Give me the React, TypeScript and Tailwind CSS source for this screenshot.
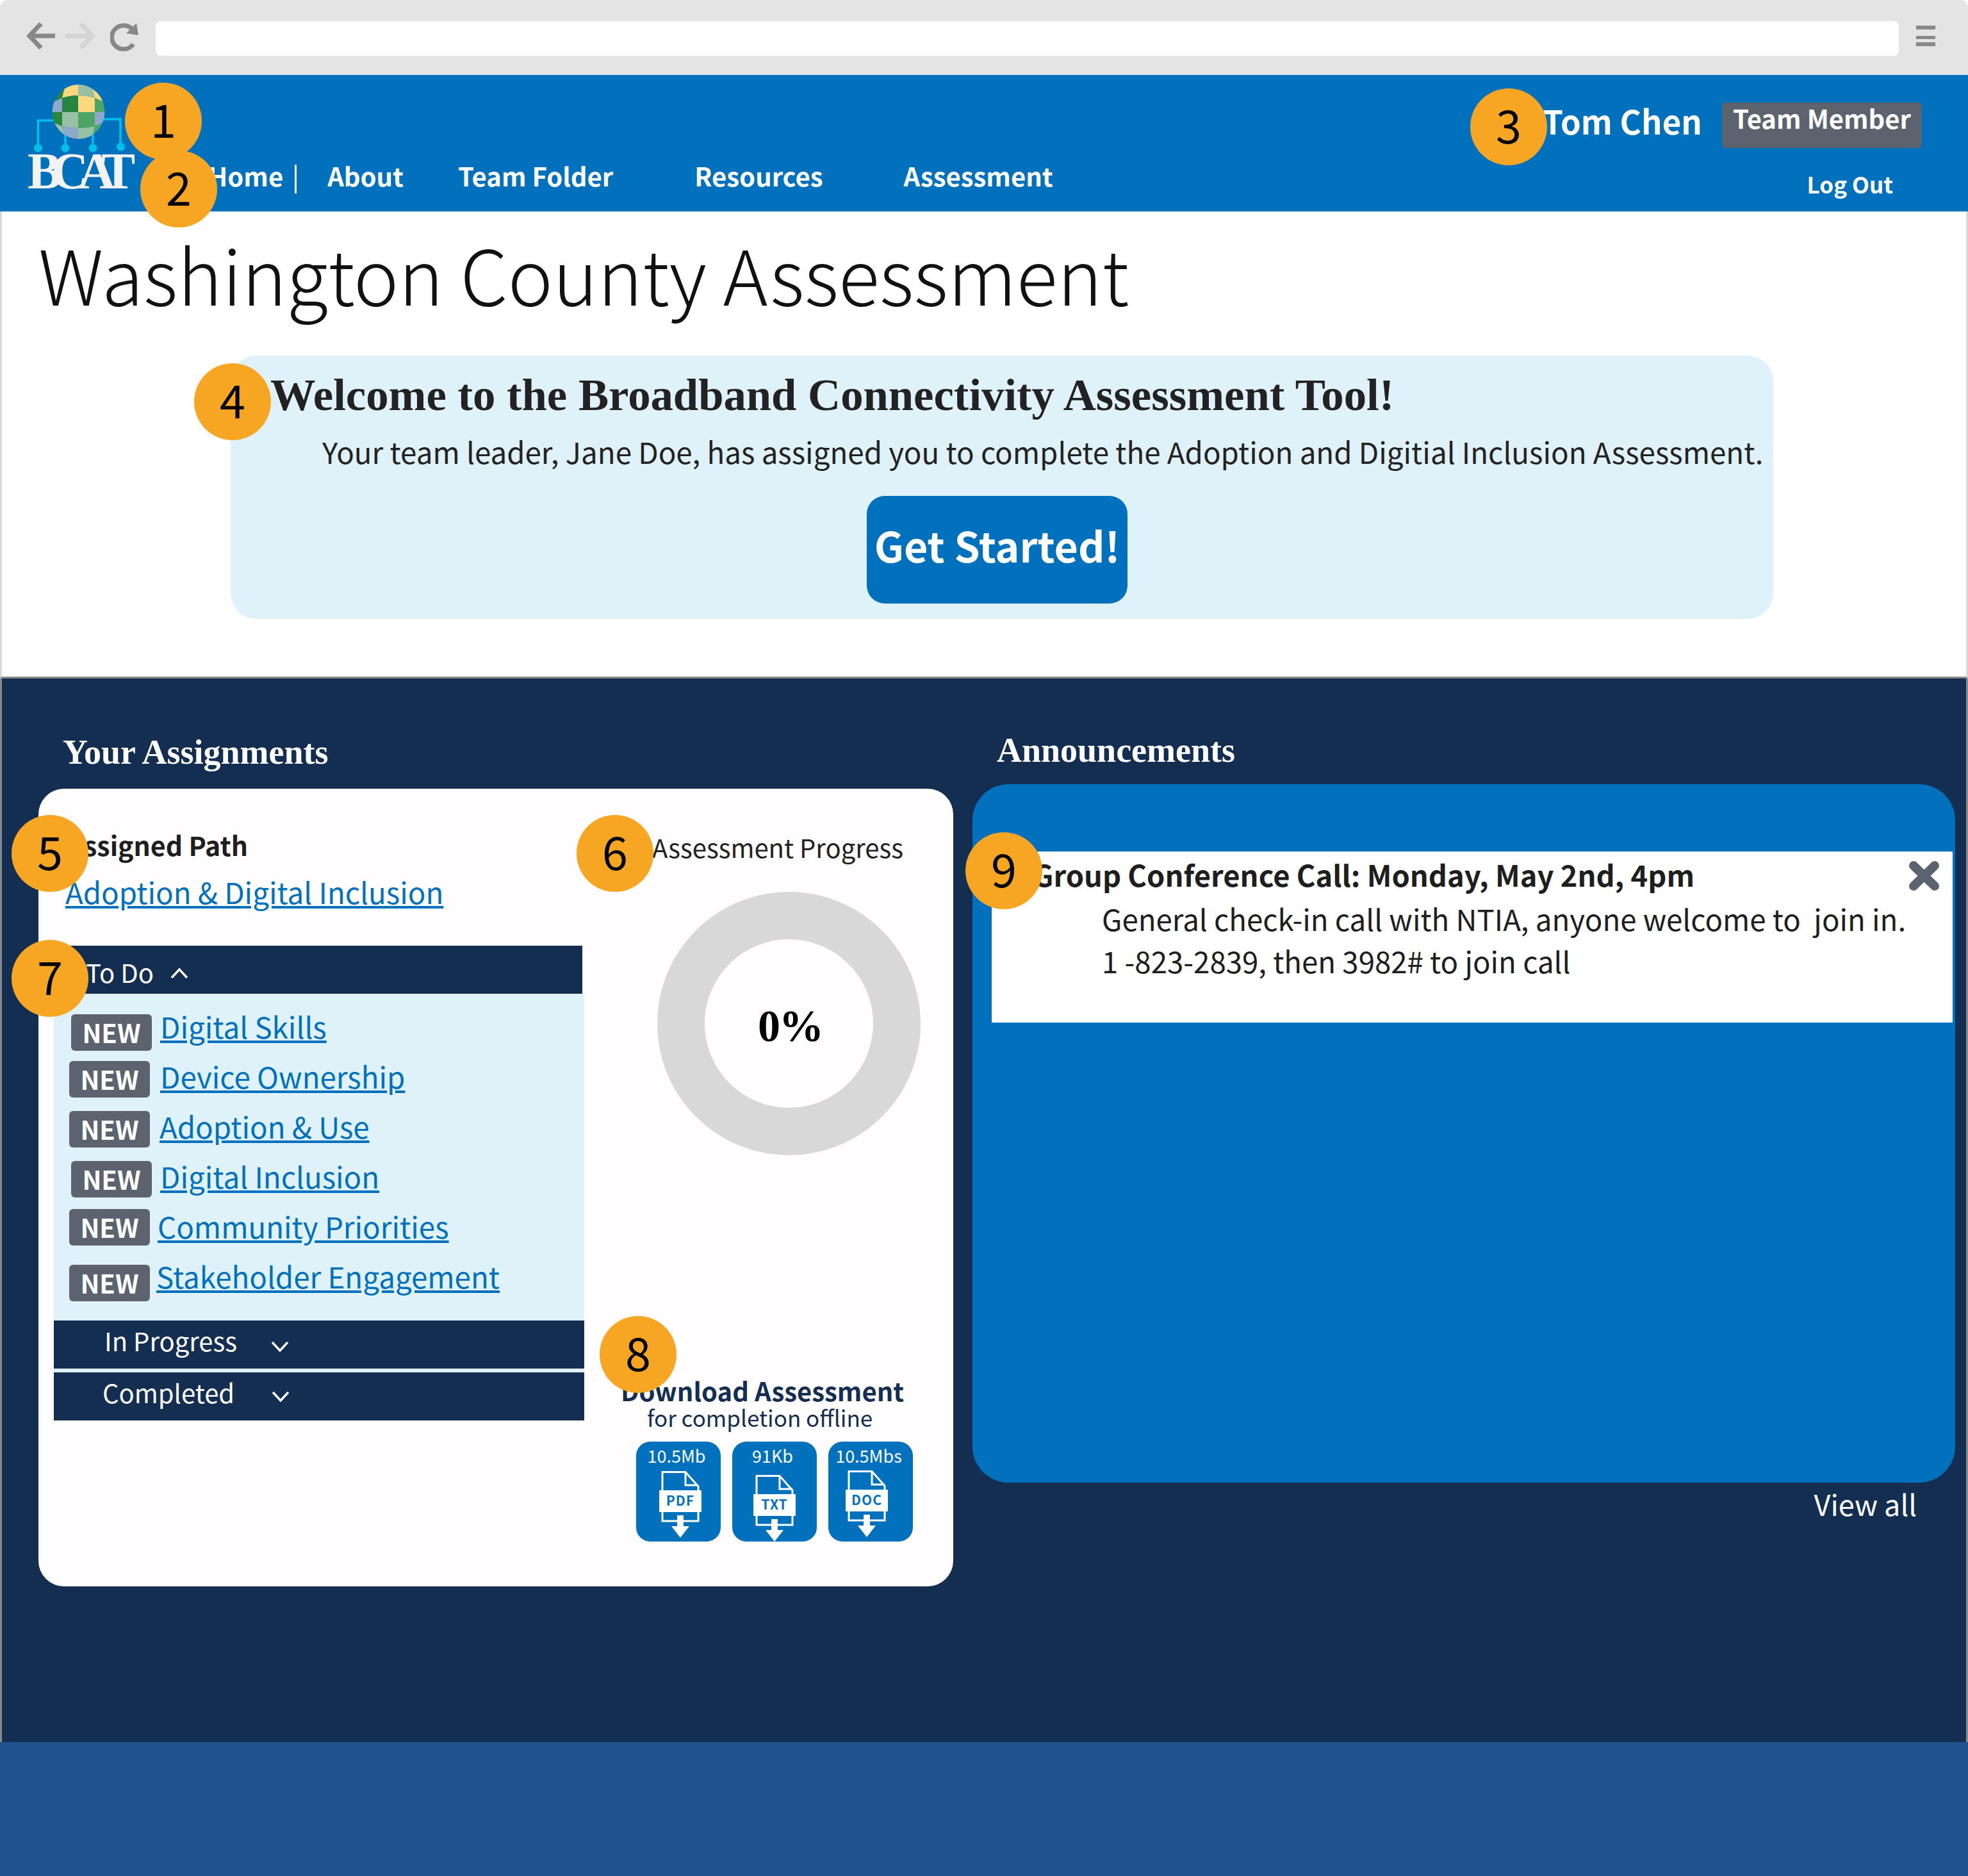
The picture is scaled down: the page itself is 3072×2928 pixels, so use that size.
import React from 'react';

const navy = 'bg-[#132e51]';

// numbered callouts that sit on top of the mock-up
const callouts = [
  { n: 1, pos: 'left-[195px] top-[129px]' },
  { n: 2, pos: 'left-[219px] top-[235px]' },
  { n: 3, pos: 'left-[2295px] top-[138px]' },
  { n: 4, pos: 'left-[303px] top-[567px]' },
  { n: 5, pos: 'left-[18px] top-[1272px]' },
  { n: 6, pos: 'left-[900px] top-[1272px]' },
  { n: 7, pos: 'left-[18px] top-[1467px]' },
  { n: 8, pos: 'left-[936px] top-[2054px]' },
  { n: 9, pos: 'left-[1507px] top-[1299px]' },
];

const todo = [
  { label: 'Digital Skills', row: 'mt-[32px]', badge: 'ml-[27px]', link: 'ml-[13px] -mt-[7px]' },
  { label: 'Device Ownership', row: 'mt-[16px]', badge: 'ml-[24px]', link: 'ml-[16px] -mt-[2px]' },
  { label: 'Adoption & Use', row: 'mt-[21px]', badge: 'ml-[24px]', link: 'ml-[15px] -mt-[2px]' },
  { label: 'Digital Inclusion', row: 'mt-[21px]', badge: 'ml-[27px]', link: 'ml-[13px] -mt-[2px]' },
  { label: 'Community Priorities', row: 'mt-[18px]', badge: 'ml-[24px]', link: 'ml-[12px] mt-[1px]' },
  { label: 'Stakeholder Engagement', row: 'mt-[30px]', badge: 'ml-[24px]', link: 'ml-[10px] -mt-[8px]' },
];

const files = [
  { size: '10.5Mb', type: 'PDF', icon: 'ml-[36px] mt-[9px]' },
  { size: '91Kb', type: 'TXT', icon: 'ml-[33px] mt-[15px]' },
  { size: '10.5Mbs', type: 'DOC', icon: 'ml-[27px] mt-[8px]' },
];

function Chevron({ up, className }: { up?: boolean; className?: string }) {
  return (
    <svg width="28" height="18" viewBox="0 0 28 18" className={className}>
      <path d={up ? 'M2 16 L14 3 L26 16' : 'M2 2 L14 15 L26 2'} fill="none" stroke="white" strokeWidth="3.5" />
    </svg>
  );
}

function FileIcon({ type, className }: { type: string; className?: string }) {
  return (
    <svg width="66" height="104" viewBox="0 0 66 104" className={className}>
      <path d="M5 30 V1.5 H41 L61 24 V30 M41 1.5 V22 H61" fill="none" stroke="white" strokeWidth="3" />
      <path d="M5 64 V78 H28 M38 78 H61 V64" fill="none" stroke="white" strokeWidth="3" />
      <rect x="0" y="30" width="66" height="34" fill="white" />
      <text x="33" y="54" textAnchor="middle" fill="#0271bd" fontSize="21" fontWeight="700" letterSpacing="1">{type}</text>
      <path d="M28 69 H38 V86 H47 L33 104 L19 86 H28 Z" fill="white" />
    </svg>
  );
}

function Logo() {
  const dark = '#26853f';
  const mid = '#4ca563';
  const light = '#97c1a2';
  const yellow = '#fbd77e';
  const peri = '#8fa8ce';
  const cells = [
    ['M70 120 H105 L97 153 L70 165 Z', dark],
    ['M105 120 H122 V149 Q110 149 97 153 Z', yellow],
    ['M122 120 H140 L148 153 Q135 149 122 149 Z', light],
    ['M140 120 H175 V165 L148 153 Z', yellow],
    ['M70 165 L97 153 V175 H70 Z', peri],
    ['M97 153 Q110 149 122 149 V175 H97 Z', dark],
    ['M122 149 Q135 149 148 153 V175 H122 Z', yellow],
    ['M148 153 L175 165 V175 H148 Z', mid],
    ['M70 175 H97 V197 L70 185 Z', dark],
    ['M97 175 H122 V200 Q110 200 97 197 Z', light],
    ['M122 175 H148 V197 Q135 200 122 200 Z', mid],
    ['M148 175 H175 V185 L148 197 Z', peri],
    ['M70 185 L97 197 L105 225 H70 Z', light],
    ['M97 197 Q110 200 122 200 V225 H105 Z', peri],
    ['M122 200 Q135 200 148 197 L142 225 H122 Z', light],
    ['M148 197 L175 185 V225 H142 Z', mid],
  ];
  return (
    <svg width="170" height="190" viewBox="40 130 170 190" className="shrink-0 ml-[40px] mt-[13px]">
      <defs>
        <clipPath id="globe">
          <ellipse cx="122.5" cy="174.5" rx="41" ry="42.5" />
        </clipPath>
      </defs>
      <path d="M85 188 H59.5 V225 M102 205 V225 M145 205 V225 M160 186 H188 V223" fill="none" stroke="#00bfe8" strokeWidth="3.5" />
      <ellipse cx="59.5" cy="231" rx="6.5" ry="6.5" fill="#00bfe8" />
      <ellipse cx="102" cy="231" rx="6.5" ry="6.5" fill="#00bfe8" />
      <ellipse cx="145" cy="231" rx="6.5" ry="6.5" fill="#00bfe8" />
      <ellipse cx="188.5" cy="229" rx="6.5" ry="6.5" fill="#00bfe8" />
      <g clipPath="url(#globe)">
        {cells.map(([d, fill], i) => (
          <path key={i} d={d} fill={fill} />
        ))}
      </g>
      <text x="43" y="294" fill="#f2f2f2" fontSize="80" fontFamily="'Liberation Serif', serif" letterSpacing="-16">BCAT</text>
    </svg>
  );
}

function BrowserBar() {
  return (
    <div className="h-[117px] bg-[#e4e4e4] rounded-t-[12px] flex items-center">
      <svg width="110" height="60" viewBox="0 0 110 60" className="ml-[40px] -mt-[4px] shrink-0">
        <path d="M46 29 H8 M24 10 L6 29 L24 48" fill="none" stroke="#888888" strokeWidth="7" />
        <path d="M62 29 H102 M86 10 L104 29 L86 48" fill="none" stroke="#d4d4d4" strokeWidth="7" />
      </svg>
      <svg width="46" height="46" viewBox="0 0 46 46" className="ml-[22px] -mt-[4px] shrink-0">
        <path d="M35 12 A18.5 18.5 0 1 0 36 35" fill="none" stroke="#888888" strokeWidth="7" />
        <path d="M41 2 L44 21 L25 18 Z" fill="#888888" />
      </svg>
      <div className="ml-[25px] w-[2721px] h-[54px] mt-[3px] bg-white rounded-[8px]" />
      <div className="ml-[27px] w-[30px] flex flex-col -mt-[5px]">
        <div className="h-[6px] bg-[#888888]" />
        <div className="h-[5px] mt-[10px] bg-[#888888]" />
        <div className="h-[6px] mt-[5px] bg-[#888888]" />
      </div>
    </div>
  );
}

function Header() {
  return (
    <div className="h-[213px] bg-[#0271bd] flex justify-between text-white font-bold">
      <div className="flex">
        <Logo />
        <nav className="flex mt-[135px] text-[40px] leading-[44px]">
          <span className="ml-[115px]">Home</span>
          <span className="w-[3px] h-[45px] bg-white ml-[18px] mt-[5px]" />
          <span className="ml-[48px]">About</span>
          <span className="ml-[85px]">Team Folder</span>
          <span className="ml-[127px]">Resources</span>
          <span className="ml-[126px]">Assessment</span>
        </nav>
      </div>
      <div className="flex flex-col items-end mr-[72px] mt-[43px]">
        <div className="flex items-start">
          <span className="text-[51px] leading-[54px] mt-[1px]">Tom Chen</span>
          <span className="ml-[31px] h-[71px] px-[17px] pt-[2px] bg-[#5c636e] rounded-[6px] text-[40px] leading-[44px]">Team Member</span>
        </div>
        <span className="mt-[36px] mr-[45px] text-[35px] leading-[40px]">Log Out</span>
      </div>
    </div>
  );
}

function Welcome() {
  return (
    <div className="h-[729px] bg-white border-x-[3px] border-x-[#d8d8d8] border-b-[3px] border-b-[#8a8a8a]">
      <h1 className="pl-[57px] pt-[30px] text-[118.4px] leading-[132px] font-light text-[#111111] whitespace-nowrap">Washington County Assessment</h1>
      <div className="ml-[357px] mt-[63px] w-[2408px] h-[411px] bg-[#e0f2f9] rounded-[40px] flex flex-col text-[#222222]">
        <h2 className="pl-[62px] pt-[25px] text-[70.7px] leading-[72px] font-bold font-['Liberation_Serif',serif] whitespace-nowrap">Welcome to the Broadband Connectivity Assessment Tool!</h2>
        <p className="pl-[143px] mt-[26px] text-[45.7px] leading-[52px] whitespace-nowrap">Your team leader, Jane Doe, has assigned you to complete the Adoption and Digitial Inclusion Assessment.</p>
        <div className="ml-[993px] mt-[44px] w-[407px] h-[168px] pb-[16px] bg-[#0271bd] rounded-[28px] flex items-center justify-center text-white font-bold text-[64.5px] leading-[72px] whitespace-nowrap">Get Started!</div>
      </div>
    </div>
  );
}

function Assignments() {
  return (
    <div className="ml-[57px] w-[1428px] shrink-0">
      <h3 className="pl-[38px] pt-[85px] mb-[27px] text-[54px] leading-[60px] font-bold text-white font-['Liberation_Serif',serif]">Your Assignments</h3>
      <div className="h-[1245px] bg-[#fffdfe] rounded-[40px] flex">
        <div className="ml-[24px] w-[828px] shrink-0">
          <div className="pl-[20px] pt-[65px] text-[41px] leading-[44px] font-bold text-[#1e1e1e]">Assigned Path</div>
          <a className="block ml-[18px] mt-[26px] text-[45.7px] leading-[50px] text-[#0271bd] underline">Adoption &amp; Digital Inclusion</a>
          <div className={`mt-[60px] w-[825px] h-[75px] ${navy} flex items-center pl-[50px] pt-[6px] text-white text-[40px] leading-[44px]`}>
            To Do
            <Chevron up className="ml-[26px] mt-[4px]" />
          </div>
          <div className="bg-[#e0f2f9] h-[666px]">
            <div className="h-[510px] flow-root">
              {todo.map((item) => (
                <div key={item.label} className={`flex items-start h-[57px] ${item.row}`}>
                  <span className={`w-[126px] h-[57px] bg-[#5c636e] rounded-[6px] text-white font-bold text-[40px] leading-[57px] text-center shrink-0 ${item.badge}`}>NEW</span>
                  <a className={`text-[45.7px] leading-[50px] text-[#0271bd] underline whitespace-nowrap ${item.link}`}>{item.label}</a>
                </div>
              ))}
            </div>
            <div className={`h-[75px] ${navy} flex items-center pl-[79px] pb-[14px] text-white text-[40px] leading-[44px]`}>
              In Progress
              <Chevron className="ml-[53px] mt-[21px]" />
            </div>
            <div className={`h-[75px] mt-[6px] ${navy} flex items-center pl-[76px] pb-[14px] text-white text-[40px] leading-[44px]`}>
              Completed
              <Chevron className="ml-[58px] mt-[15px]" />
            </div>
          </div>
        </div>
        <div className="flex-1">
          <div className="pl-[106px] pt-[69px] text-[40px] leading-[44px] text-[#222222]">Assessment Progress</div>
          <div className="ml-[114px] mt-[48px] w-[411px] h-[411px] rounded-full border-[74px] border-[#d8d8d8] flex items-center justify-center">
            <span className="pt-[8px] pl-[4px] text-[70px] leading-[70px] tracking-[-2px] font-bold text-black font-['Liberation_Serif',serif]">0%</span>
          </div>
          <div className="ml-[57px] mt-[345px] text-[40px] leading-[44px] font-bold text-[#132e51]">Download Assessment</div>
          <div className="ml-[98px] text-[35px] leading-[40px] text-[#132e51]">for completion offline</div>
          <div className="ml-[81px] mt-[18px] flex gap-[18px]">
            {files.map((f) => (
              <div key={f.type} className="w-[132px] h-[156px] bg-[#0271bd] rounded-[22px] pt-[7px] text-white">
                <div className="pr-[6px] text-center text-[27px] leading-[30px]">{f.size}</div>
                <FileIcon type={f.type} className={f.icon} />
              </div>
            ))}
          </div>
        </div>
      </div>
    </div>
  );
}

function Announcements() {
  return (
    <div className="ml-[30px] w-[1534px] shrink-0">
      <h3 className="pl-[38px] pt-[82px] mb-[23px] text-[54px] leading-[60px] font-bold text-white font-['Liberation_Serif',serif]">Announcements</h3>
      <div className="h-[1090px] bg-[#0271bd] rounded-[56px] pt-[105px] pl-[30px]">
        <div className="relative w-[1500px] h-[267px] bg-white pt-[10px] text-[#1e1e1e]">
          <div className="pl-[64px] text-[45.3px] leading-[50px] font-bold">Group Conference Call: Monday, May 2nd, 4pm</div>
          <div className="pl-[172px] mt-[11px] text-[45.6px] leading-[66px] whitespace-pre">{'General check-in call with NTIA, anyone welcome to  join in.\n1 -823-2839, then 3982# to join call'}</div>
          <svg width="47" height="46" viewBox="0 0 47 46" className="absolute right-[21px] top-[15px]">
            <path d="M7 7 L40 39 M40 7 L7 39" fill="none" stroke="#5c636e" strokeWidth="14" strokeLinecap="round" />
          </svg>
        </div>
      </div>
      <div className="mt-[3px] pr-[60px] text-right text-[45px] leading-[60px] text-white">View all</div>
    </div>
  );
}

export default function App() {
  return (
    <div className="relative w-[3072px] h-[2928px] overflow-hidden bg-white font-['Noto_Sans_CJK_SC','Noto_Sans',sans-serif]">
      <BrowserBar />
      <Header />
      <Welcome />
      <div className={`h-[1660px] ${navy} border-x-[3px] border-x-[#8a8a8a] flex`}>
        <Assignments />
        <Announcements />
      </div>
      <div className="h-[209px] bg-[#21538f]" />
      {callouts.map((c) => (
        <div key={c.n} className={`absolute w-[120px] h-[120px] pb-[10px] rounded-full bg-[#f6a623] flex items-center justify-center text-black text-[72px] leading-[72px] ${c.pos}`}>
          {c.n}
        </div>
      ))}
    </div>
  );
}
